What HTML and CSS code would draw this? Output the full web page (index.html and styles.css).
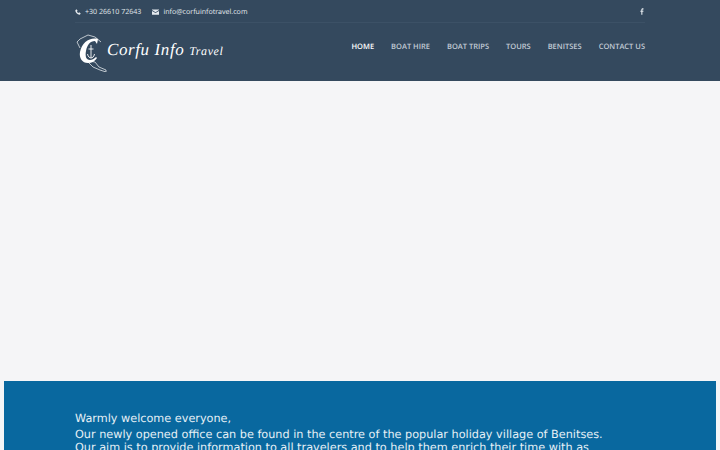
FILE: index.html
```html
<!DOCTYPE html>
<html lang="en">
<head>
  <meta charset="UTF-8">
  <meta name="viewport" content="width=device-width, initial-scale=1.0">
  <title>Corfu Info Travel</title>
  <link rel="stylesheet" href="styles.css">
</head>
<body>
  <header class="site-header">
    <!-- Contact strip -->
    <div class="top-bar">
      <ul class="contact-list">
        <li>
          <svg class="contact-icon" viewBox="0 0 10 10" aria-hidden="true"><path d="M2.400 .6 .6 2c-.4 3.200 3.900 7.800 7.400 7.400L9.600 7.600 7 5.600 5.900 6.700C4.900 6.300 3.700 5.100 3.300 4L4.400 3z"/></svg>
          +30 26610 72643
        </li>
        <li>
          <svg class="contact-icon mail" viewBox="0 0 10 8" aria-hidden="true"><path d="M0 .5h10v.8L5 4.500 0 1.300zM0 2.400l5 3.200 5-3.200V8H0z"/></svg>
          info@corfuinfotravel.com
        </li>
      </ul>
      <a class="social-link" href="#" aria-label="Facebook">
        <svg class="social-icon" viewBox="0 0 5 8" aria-hidden="true"><path d="M3 8V4.400h1.200l.2-1.400H3v-.9c0-.4.1-.7.7-.7h.7V.1C4.300.1 3.900 0 3.400 0 2.300 0 1.600.7 1.600 1.900V3H.4v1.400h1.200V8z"/></svg>
      </a>
    </div>
    <!-- Logo and menu -->
    <div class="main-bar">
      <a class="logo" href="#">
        <svg class="logo-mark" viewBox="0 0 32 38" aria-hidden="true">
          <path class="island" d="M5 14 2 8l3-3 8-4 7 2 6 5M14 27l6 1 4 5 7 3v2l-6-2-7-3-5-5"/>
          <path class="letter" d="M23 5c-8-2-16 3-18 13-1 6 2 11 8 11 4 0 7-2 9-5l-1-1c-2 2-4 3-6 3-4 0-5-4-4-9 1-6 4-10 9-10l2 3z"/>
          <path class="anchor" d="M16 11v13M13.500 15h5M12.500 20c.5 3 2.500 4 3.500 4s3-1 3.500-4"/>
        </svg>
        <span class="logo-text">Corfu Info <small>Travel</small></span>
      </a>
      <nav class="main-nav">
        <ul class="menu">
          <li><a class="active" href="#">HOME</a></li>
          <li><a href="#">BOAT HIRE</a></li>
          <li><a href="#">BOAT TRIPS</a></li>
          <li><a href="#">TOURS</a></li>
          <li><a href="#">BENITSES</a></li>
          <li><a href="#">CONTACT US</a></li>
        </ul>
      </nav>
    </div>
  </header>
  <main>
    <div class="slider"></div>
    <section class="welcome">
      <p class="greeting">Warmly welcome everyone,</p>
      <p>Our newly opened office can be found in the centre of the popular holiday village of Benitses.<br>
      Our aim is to provide information to all travelers and to help them enrich their time with as</p>
    </section>
  </main>
</body>
</html>
```

FILE: styles.css
```css
/* Basic layout */
html, body {
  margin: 0;
  padding: 0;
  height: 100%;
  overflow: hidden;
}
body {
  background: #f5f5f7;
  font-family: "Open Sans", sans-serif;
  text-rendering: geometricPrecision;
}
ul {
  list-style: none;
  margin: 0;
  padding: 0;
}
a {
  text-decoration: none;
  color: inherit;
}
/* Header */
.site-header {
  background: #34495e;
  color: #e4e9ee;
  height: 81px;
  padding: 0 75px;
}
.top-bar {
  box-sizing: border-box;
  height: 23px;
  padding-top: 1px;
  display: flex;
  justify-content: space-between;
  align-items: center;
  border-bottom: 1px solid #3c5166;
  font-size: 7.100px;
}
.contact-list {
  display: flex;
  gap: 11px;
}
.contact-list li {
  display: flex;
  align-items: center;
  gap: 4px;
}
.contact-icon {
  width: 6px;
  height: 6px;
  fill: #e4e9ee;
}
.contact-icon.mail {
  width: 7px;
}
.social-link {
  display: flex;
  padding-right: 1px;
}
.social-icon {
  width: 4px;
  height: 7px;
  fill: #e4e9ee;
}
.main-bar {
  display: flex;
  justify-content: space-between;
  align-items: center;
  height: 58px;
}
/* Logo */
.logo {
  display: flex;
  align-items: center;
  color: #fff;
  margin-top: 1px;
}
.logo-mark {
  width: 32px;
  height: 38px;
}
.island {
  fill: none;
  stroke: #dfe4e9;
  stroke-width: 0.8;
}
.letter {
  fill: #fff;
}
.anchor {
  fill: none;
  stroke: #fff;
  stroke-width: 0.9;
}
.logo-text {
  font-family: "Liberation Serif", serif;
  font-style: italic;
  font-size: 17px;
  letter-spacing: 0.6px;
  white-space: nowrap;
  margin-bottom: 5px;
}
.logo-text small {
  font-size: 12px;
}
/* Menu */
.main-nav {
  margin-bottom: 11px;
}
.menu {
  display: flex;
  gap: 17px;
  font-size: 7.500px;
  font-weight: 600;
  color: #c3ccd6;
}
.menu a.active {
  color: #fff;
}
/* Page content */
.slider {
  height: 300px;
}
.welcome {
  background: #09689f;
  color: #e6f0f6;
  margin: 0 4px;
  padding: 31px 71px;
  font-family: "DejaVu Sans", sans-serif;
  font-size: 11.250px;
  line-height: 13px;
}
.welcome p {
  margin: 0;
}
.welcome .greeting {
  margin-bottom: 3px;
}
```
